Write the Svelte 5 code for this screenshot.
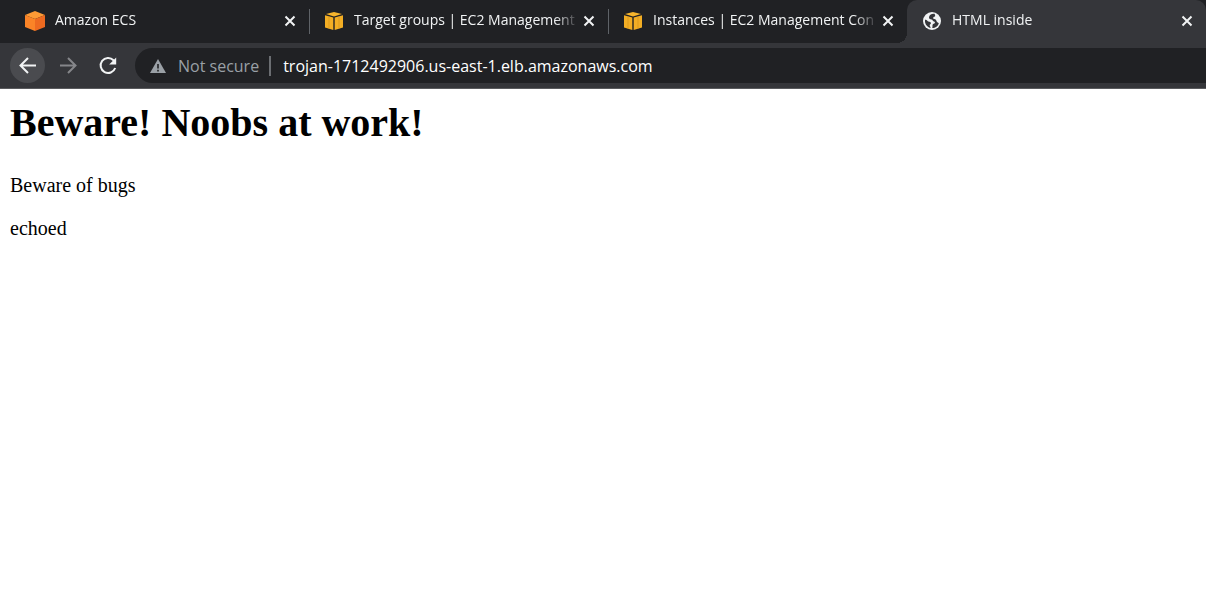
<script>
  let tabs = [
    { title: 'Amazon ECS', icon: 'ecs' },
    { title: 'Target groups | EC2 Management', icon: 'ec2' },
    { title: 'Instances | EC2 Management Con', icon: 'ec2' },
    { title: 'HTML inside', icon: 'globe', active: true }
  ];
  let url = 'trojan-1712492906.us-east-1.elb.amazonaws.com';
</script>

<div class="browser">
  <nav class="tabs" aria-label="Tabs">
    {#each tabs as tab, i}
      <div class="tab" class:active={tab.active} class:divided={i < tabs.length - 2}>
        <button class="select">
          {#if tab.icon === 'ecs'}
            <svg class="favicon" viewBox="0 0 20 20" aria-hidden="true">
              <path d="M10 0 20 4 10 8 0 4Z" fill="#fd9a35" />
              <path d="M0 4 10 8V20L0 16Z" fill="#fb8427" />
              <path d="M20 4 10 8V20L20 16Z" fill="#ee6a20" />
            </svg>
          {:else if tab.icon === 'ec2'}
            <svg class="favicon" viewBox="0 0 20 20" aria-hidden="true">
              <path d="M10 1 18 3 10 5.400 2 3Z" fill="#f7b52c" />
              <path d="M1 4.300 9.300 6.600V19L1 16.500Z" fill="#f3ae24" />
              <path d="M19 4.300 10.700 6.600V19L19 16.500Z" fill="#f3ae24" />
              <path d="M5 5.500V17.700M15 5.500V17.700" stroke="#d3921c" stroke-width=".7" />
            </svg>
          {:else}
            <svg class="favicon" viewBox="0 0 20 20" aria-hidden="true">
              <circle cx="10" cy="10" r="9" fill="#f1f3f4" />
              <path d="M12.800 2.900C9.500 2.500 7 4.200 7 6.800c.2 1.400 1.200 1.500 2.500 1.600 1.400.1 1 1.700 2.400 2.100 1 .3 1.300.8.900 1.600-.5.900-1.700.6-2.100 1.500-.5 1.100.1 1.800-.5 3.500 2.900.2 5.900-2 6.600-4.900-.8-.9-1.600-.7-2.100-1.700-.5-1.200-.9-2.300-2.500-2.400-1.300-.1-1-.9-.9-1.500.2-.9 1.700-.5 1.900-1.500.2-.8-.5-1.100-.4-2.200Z" fill="#35363a" />
              <path d="M3 8.800c-.5 3 1 6.200 4 7.700l1.500.4c.3-1.300-.9-1.500-.8-2.700.1-1 1.300-.9 1.200-2.100C8.800 10.200 6.500 11 5.500 9.900 4.700 9 4.100 8.800 3 8.800Z" fill="#35363a" />
            </svg>
          {/if}
          <span class="title">{tab.title}</span>
        </button>
        <button class="close" aria-label="Close tab">
          <svg viewBox="0 0 20 20" aria-hidden="true"><path d="m5.500 5.500 9 9m0-9-9 9" /></svg>
        </button>
      </div>
    {/each}
  </nav>

  <header class="toolbar">
    <button class="nav back" aria-label="Back">
      <svg viewBox="0 0 20 20" aria-hidden="true"><path d="M18 9.500H3M10 2 2.500 9.500 10 17" /></svg>
    </button>
    <button class="nav forward" aria-label="Forward">
      <svg viewBox="0 0 20 20" aria-hidden="true"><path d="M2 9.500h15M10 2l7.500 7.500L10 17" /></svg>
    </button>
    <button class="nav" aria-label="Reload">
      <svg viewBox="0 0 20 20" aria-hidden="true">
        <path d="M17.200 12A7.500 7.500 0 1 1 15.500 4.200L17 6" />
        <path d="M18.200 1.500V8.500H11.200Z" fill="#f1f3f4" stroke="none" />
      </svg>
    </button>
    <div class="address">
      <button class="security">
        <svg viewBox="0 0 16 16" aria-hidden="true">
          <path d="M8 1 16 15H0Z" fill="#9aa0a6" />
          <path d="M8 6v4.500M8 11.700v1.800" stroke="#202124" stroke-width="1.600" />
        </svg>
        <span>Not secure</span>
      </button>
      <input type="text" aria-label="Address" bind:value={url} spellcheck="false" />
    </div>
  </header>

  <main>
    <h1>Beware! Noobs at work!</h1>
    <p>Beware of bugs</p>
    <p>echoed</p>
  </main>
</div>

<style>
  :global(body) {
    margin: 0;
    background: #fff;
  }

  .browser {
    font-family: "Segoe UI", "Open Sans", "Noto Sans", sans-serif;
  }

  button,
  input {
    margin: 0;
    padding: 0;
    border: 0;
    background: none;
    color: inherit;
    font: inherit;
  }

  .tabs {
    display: grid;
    grid-template-columns: repeat(4, minmax(0, 1fr));
    height: 43px;
    padding-left: 10px;
    background: #202124;
    color: #f1f3f4;
    font-size: 14px;
  }

  .tab {
    position: relative;
    display: flex;
    align-items: center;
    padding: 0 9px 1px 15px;
  }

  .divided::after {
    content: "";
    position: absolute;
    right: -1px;
    top: 9px;
    bottom: 9px;
    width: 1px;
    background: #5f6368;
  }

  .active {
    background: #35363a;
    border-radius: 10px 10px 0 0;
  }

  .active::before {
    content: "";
    position: absolute;
    left: -10px;
    bottom: 0;
    width: 10px;
    height: 10px;
    background: radial-gradient(circle at 0 0, transparent 10px, #35363a 10px);
  }

  .select {
    display: flex;
    flex: 1;
    min-width: 0;
    align-items: center;
    gap: 10px;
    line-height: 20px;
    text-align: left;
  }

  .favicon {
    flex: none;
    width: 20px;
    height: 20px;
  }

  .title {
    flex: 1;
    min-width: 0;
    overflow: hidden;
    padding-bottom: 2px;
    white-space: nowrap;
    mask-image: linear-gradient(to left, transparent, #000 24px);
  }

  .close {
    flex: none;
    width: 20px;
    height: 20px;
  }

  svg {
    display: block;
  }

  .close path {
    fill: none;
    stroke: #f1f3f4;
    stroke-width: 2;
  }

  .toolbar {
    display: flex;
    gap: 5px;
    padding: 5px 0 5px 10px;
    border-bottom: 1px solid #5a5b5e;
    background: #35363a;
  }

  .nav {
    display: grid;
    place-items: center;
    flex: none;
    width: 35px;
    height: 35px;
    border-radius: 50%;
  }

  .nav svg {
    width: 20px;
    height: 20px;
    fill: none;
    stroke: #f1f3f4;
    stroke-width: 2;
  }

  .back {
    background: #4a4b4f;
  }

  .nav.forward svg {
    stroke: #85868a;
  }

  .address {
    display: flex;
    flex: 1;
    align-items: center;
    margin-left: 5px;
    padding-left: 15px;
    border-radius: 18px 0 0 18px;
    background: #202124;
    color: #fff;
    font-size: 16px;
  }

  .security {
    display: flex;
    align-items: center;
    gap: 12px;
    height: 20px;
    padding-right: 10px;
    border-right: 2px solid #6b6e72;
    color: #9aa0a6;
    line-height: 20px;
    white-space: nowrap;
  }

  .security svg {
    width: 16px;
    height: 16px;
  }

  .address input {
    flex: 1;
    min-width: 0;
    height: 24px;
    margin-left: 12px;
    outline: none;
  }

  main {
    padding: 11px 10px;
    color: #000;
    font: 20px/23px "Liberation Serif", "Times New Roman", serif;
  }

  h1 {
    margin: 0 0 28px;
    font-size: 40px;
    line-height: 46px;
  }

  p {
    margin: 0 0 20px;
  }
</style>
